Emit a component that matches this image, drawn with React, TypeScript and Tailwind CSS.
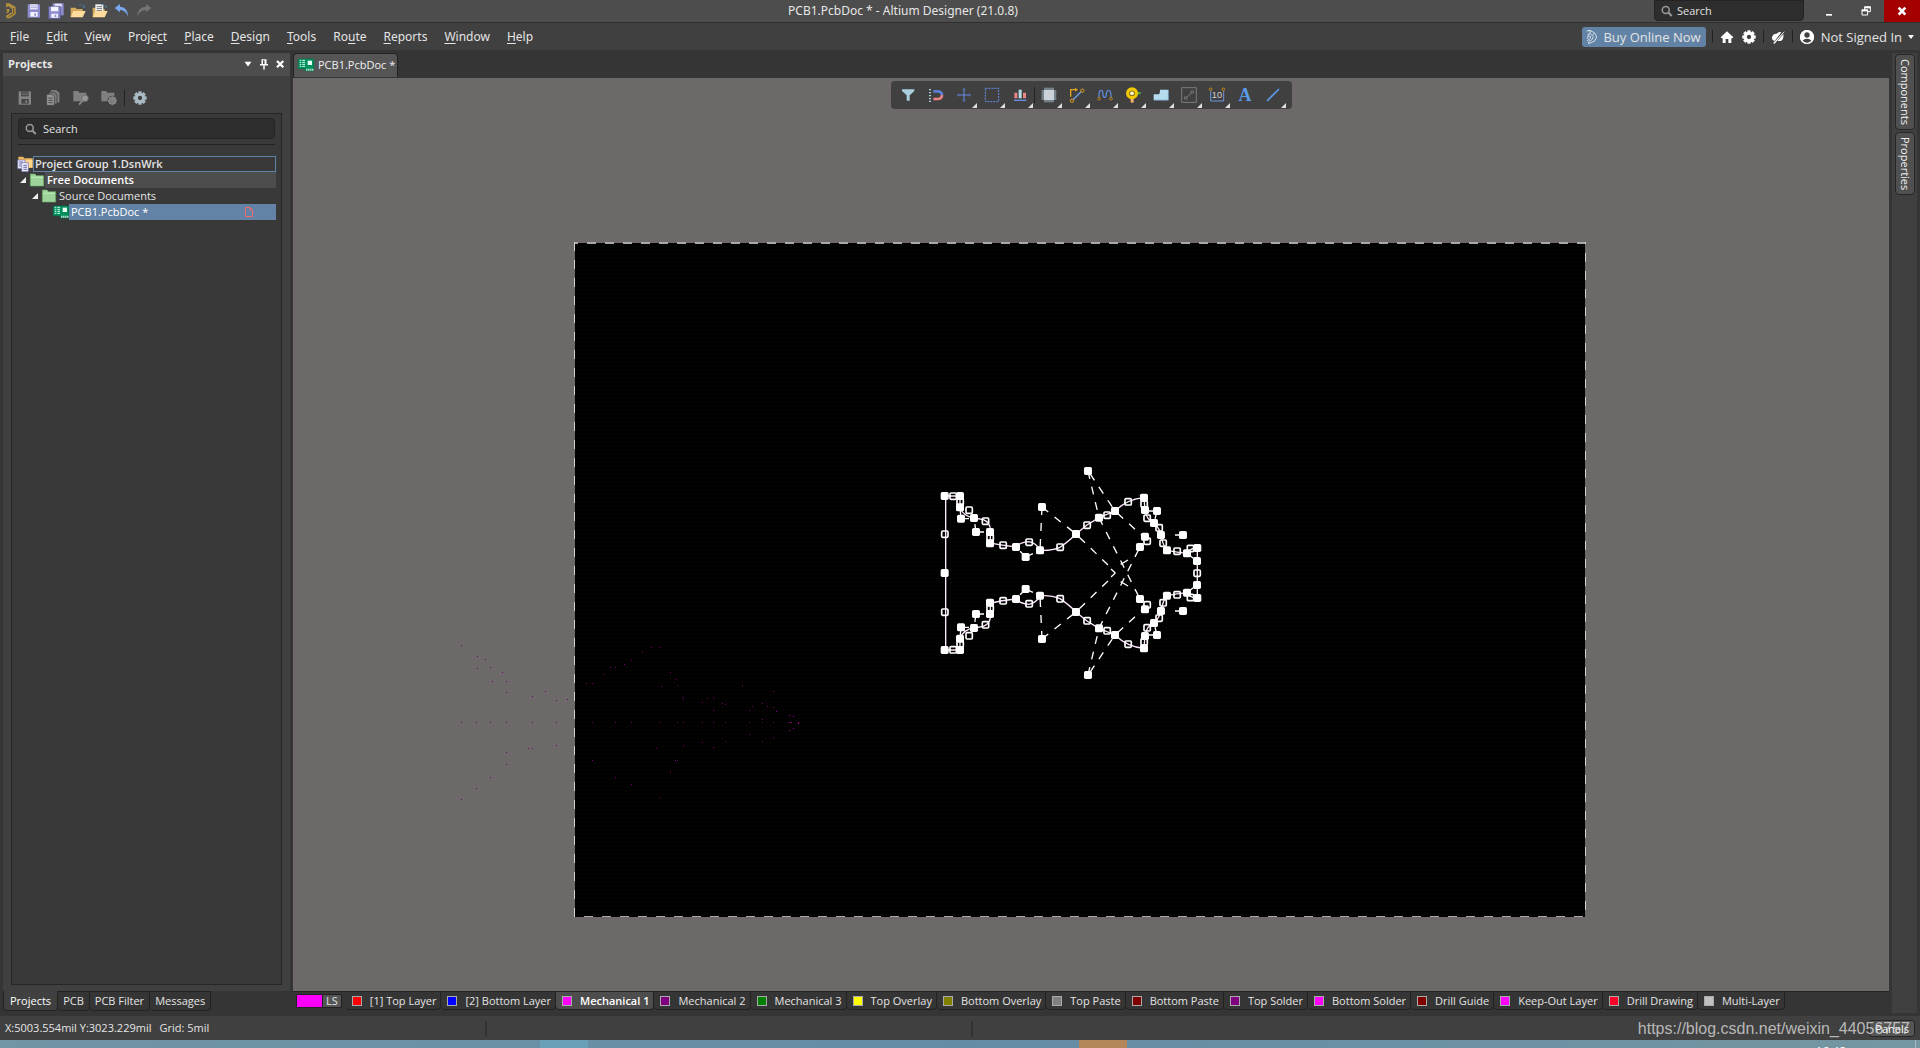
import type { ReactNode } from "react";

type Point = [number, number];

const MENU: [string, string, string][] = [
  ["", "F", "ile"],
  ["", "E", "dit"],
  ["", "V", "iew"],
  ["Proje", "c", "t"],
  ["", "P", "lace"],
  ["", "D", "esign"],
  ["", "T", "ools"],
  ["Ro", "u", "te"],
  ["", "R", "eports"],
  ["", "W", "indow"],
  ["", "H", "elp"],
];

const LAYERS = [
  { name: "[1] Top Layer", color: "#ff0000" },
  { name: "[2] Bottom Layer", color: "#0000ff" },
  { name: "Mechanical 1", color: "#ff00ff", active: true },
  { name: "Mechanical 2", color: "#800080" },
  { name: "Mechanical 3", color: "#008000" },
  { name: "Top Overlay", color: "#ffff00" },
  { name: "Bottom Overlay", color: "#808000" },
  { name: "Top Paste", color: "#808080" },
  { name: "Bottom Paste", color: "#800000" },
  { name: "Top Solder", color: "#800080" },
  { name: "Bottom Solder", color: "#ff00ff" },
  { name: "Drill Guide", color: "#800000" },
  { name: "Keep-Out Layer", color: "#ff00ff" },
  { name: "Drill Drawing", color: "#ff002b" },
  { name: "Multi-Layer", color: "#c0c0c0" },
];

// outline geometry, upper half only; the lower half is mirrored about AXIS
const AXIS = 354;

const FILLED: Point[] = [
  [44, 123], [90, 123], [90, 157], [93, 191], [132, 189], [138, 231], [180, 231],
  [180, 265], [258, 276], [287, 306], [330, 286], [336, 156], [438, 237], [507, 188],
  [555, 168], [474, 48], [642, 128], [645, 165], [681, 168], [672, 204], [645, 245],
  [630, 276], [693, 240], [759, 240], [711, 286], [771, 295], [802, 279], [801, 318],
];

const OPEN: Point[] = [
  [69, 123], [90, 140], [117, 165], [166, 198], [180, 247], [219, 270], [297, 261],
  [390, 276], [471, 210], [531, 180], [594, 140], [642, 147], [651, 189], [687, 218],
  [651, 258], [699, 264], [741, 288], [781, 280],
];

// stray primitives left of the outline, 3 units to a pixel
const DOTS: Point[] = [
  [64, 76], [112, 108], [137, 118], [112, 146], [150, 143], [188, 156], [157, 184],
  [199, 183], [199, 216], [276, 228], [317, 214], [348, 240], [382, 237], [64, 307],
  [108, 307], [150, 307], [199, 307], [276, 307], [348, 307], [348, 375], [264, 386],
  [276, 386], [199, 398], [199, 433], [150, 471], [108, 505], [64, 538], [440, 191],
  [457, 191], [492, 163], [510, 142], [525, 142], [552, 133], [575, 121], [607, 97],
  [634, 82], [661, 82], [690, 157], [708, 177], [713, 197], [664, 199], [727, 233],
  [729, 237], [457, 307], [525, 307], [575, 307], [661, 307], [713, 307], [729, 307],
  [788, 307], [820, 307], [855, 307], [927, 307], [966, 307], [999, 307], [788, 248],
  [802, 236], [820, 232], [820, 272], [848, 250], [855, 252], [908, 196], [927, 270],
  [938, 259], [966, 250], [981, 259], [999, 263], [999, 214], [1009, 273], [966, 299],
  [1049, 285], [1060, 288], [1049, 307], [1055, 307], [1076, 306], [1076, 311],
  [1060, 326], [1049, 330], [999, 351], [966, 363], [927, 343], [855, 363], [820, 382],
  [788, 366], [729, 376], [648, 385], [457, 422], [705, 422], [713, 420], [690, 457],
  [525, 471], [575, 493], [661, 532],
];

function Half() {
  return (
    <g>
      <path
        d="M47 354V123H90V157Q100 185 132 189L160 194Q184 204 181 231V263Q205 270 258 276Q270 262 297 260Q318 263 330 286Q364 288 390 277Q420 256 438 237L471 210L507 188L555 168Q592 132 642 128L645 165Q650 196 672 204Q690 222 693 240Q698 270 711 286Q742 292 771 295Q782 278 802 279V354"
        stroke="#ffe8ff"
        strokeWidth="4"
      />
      <path
        d="M336 156L330 286M336 156L438 237L536 332M474 48L507 188M480 56L555 168L645 250M507 188L630 432M681 168H645M681 168L672 204M759 240H735M93 191L90 157M93 191H132M138 231L132 189M138 231H180M287 306L258 276M287 306L330 286M771 295L801 318"
        stroke="#fff"
        strokeWidth="4"
        strokeDasharray="24 24"
      />
      <path d="M543 342L556 354M594 315L572 328" stroke="#fff" strokeWidth="4" />
      {FILLED.map(([x, y]) => (
        <rect key={`f${x}-${y}`} x={x - 12} y={y - 12} width="24" height="24" rx="5" fill="#fff" />
      ))}
      {OPEN.map(([x, y]) => (
        <rect key={`o${x}-${y}`} x={x - 9} y={y - 9} width="19" height="19" rx="3" stroke="#fff" strokeWidth="5" />
      ))}
    </g>
  );
}

function Board() {
  return (
    <svg
      viewBox="293 78 1596 913"
      className="block h-full w-full"
      fill="none"
      role="img"
      aria-label="PCB board"
    >
      <defs>
        <pattern id="grid" width="4" height="4" patternUnits="userSpaceOnUse">
          <rect x="2" y="2" width="1" height="1" fill="#0d0d0d" />
        </pattern>
      </defs>
      <rect x="575" y="243" width="1010" height="674" fill="#000" />
      <rect x="575" y="243" width="1010" height="673" fill="url(#grid)" />
      <g stroke="#a8a8a8" strokeDasharray="9 9">
        <path d="M574 243H1585" strokeWidth="2" strokeDashoffset="5" />
        <path d="M574 916.5H1585" strokeDashoffset="8" />
        <path d="M574.5 242V917" stroke="#d0d0d0" />
        <path d="M1585.5 242V917" strokeDashoffset="7" stroke="#d0d0d0" />
      </g>
      <g shapeRendering="crispEdges">
        {DOTS.map(([x, y]) => (
          <rect
            key={`${x}-${y}`}
            x={440 + Math.round(x / 3 - 0.5)}
            y={620 + Math.round(y / 3 - 0.5)}
            width="1"
            height="1"
            fill={x > 1000 ? "#a000a0" : "#700070"}
          />
        ))}
      </g>
      <g transform="translate(930 455) scale(0.3333)">
        <Half />
        <g transform={`translate(0 ${AXIS * 2}) scale(1 -1)`}>
          <Half />
        </g>
        <rect x="32" y="342" width="24" height="24" rx="5" fill="#fff" />
        <rect x="35" y="228" width="19" height="19" rx="3" stroke="#fff" strokeWidth="5" />
        <rect x="35" y="462" width="19" height="19" rx="3" stroke="#fff" strokeWidth="5" />
        <rect x="792" y="345" width="19" height="19" rx="3" stroke="#fff" strokeWidth="5" />
      </g>
    </svg>
  );
}

function Icon({ size = "h-4 w-4", children }: { size?: string; children: ReactNode }) {
  return (
    <svg viewBox="0 0 48 48" className={`${size} shrink-0 overflow-visible`} fill="none" aria-hidden="true">
      {children}
    </svg>
  );
}

function Disk({ body, paper }: { body: string; paper: string }) {
  return (
    <Icon>
      <path d="M5 4H42V44H5z" fill={body} />
      <path d="M12 4H35V19H12z" fill={paper} />
      <path d="M13 27H35V41H13z" fill={paper} />
      <path d="M13 9H34M13 14H34" stroke={body} strokeWidth="2" />
      <path d="M25 31H30V38H25z" fill={body} />
    </Icon>
  );
}

function PcbIcon() {
  return (
    <Icon>
      <path d="M1 6H47V42H22V35H1z" fill="#00905c" stroke="#007a4c" strokeWidth="2" />
      <path d="M5 10h5M5 16h5M5 22h5M5 28h5M13 10h8M13 16h8M13 22h8M13 28h8" stroke="#d8fff0" strokeWidth="3" />
      <path d="M29 11H42V24H29z" fill="#e8fff6" />
      <path d="M25 38h3M31 38h3M37 38h3M43 38h3" stroke="#fff" strokeWidth="6" />
    </Icon>
  );
}

function Magnifier() {
  return (
    <Icon size="h-3 w-3">
      <circle cx="19" cy="20" r="14" stroke="#999" strokeWidth="6" />
      <path d="M30 31L43 44" stroke="#999" strokeWidth="8" />
    </Icon>
  );
}

const gearTeeth = [0, 45, 90, 135, 180, 225, 270, 315];

function Gear({ color, size }: { color: string; size?: string }) {
  return (
    <Icon size={size}>
      {gearTeeth.map((a) => (
        <rect key={a} x="19" y="4" width="10" height="12" fill={color} transform={`rotate(${a} 24 24)`} />
      ))}
      <circle cx="24" cy="24" r="11" stroke={color} strokeWidth="9" />
    </Icon>
  );
}

function OpenFolder({ paper }: { paper?: boolean }) {
  return (
    <Icon>
      <path d="M2 14H17L20 18H38V42H2z" fill="#d3a95c" />
      {paper && (
        <>
          <path d="M10 4H34V32H10z" fill="#f5f5f5" />
          <path d="M14 11H30M14 17H30M14 23H30" stroke="#777" strokeWidth="3" />
        </>
      )}
      <path d="M10 24H47L38 43H2z" fill="#ffdc9c" />
      <path d="M27 6Q38 2 42 12" stroke="#4a7ca0" strokeWidth="3" strokeDasharray="4 2" />
      <path d="M37 10H47L42 16z" fill="#4a7ca0" />
    </Icon>
  );
}

function TitleBar() {
  return (
    <header className="flex h-[23px] shrink-0 items-start border-b border-[#2f2f2f] bg-[#4d4d4d]">
      <div className="flex items-center gap-[6px] pt-[3px] pl-[3px]">
        <Icon>
          <path d="M9 1H19L38 12V33L21 46H11L9 38L27 28V18L17 10L9 13z" fill="#b28f3e" />
          <path d="M9 18H20L17 29L9 31L13 24z" fill="#b28f3e" />
          <path d="M32 15V31L17 41" stroke="#5c4f2c" strokeWidth="3" />
        </Icon>
        <button type="button" aria-label="Save" className="ml-px">
          <Disk body="#8c8cce" paper="#f4f4ff" />
        </button>
        <button type="button" aria-label="Save all">
          <Icon>
            <path d="M14 1H47V37H14z" fill="#8c8cce" />
            <path d="M20 2H41V12H20z" fill="#e8e8fa" />
            <path d="M2 10H37V47H2z" fill="#8c8cce" stroke="#51518a" strokeWidth="2" />
            <path d="M9 11H31V25H9zM10 32H30V44H10z" fill="#f4f4ff" />
            <path d="M20 35H25V42H20z" fill="#8c8cce" />
          </Icon>
        </button>
        <button type="button" aria-label="Open">
          <OpenFolder />
        </button>
        <button type="button" aria-label="Open document">
          <OpenFolder paper />
        </button>
        <button type="button" aria-label="Undo">
          <Icon>
            <path d="M2 15L18 3V11Q42 12 42 42Q37 22 18 21V28z" fill="#78a8ee" />
          </Icon>
        </button>
        <button type="button" aria-label="Redo">
          <Icon>
            <path d="M46 15L30 3V11Q4 12 4 42Q10 22 30 21V28z" fill="#747474" />
          </Icon>
        </button>
      </div>
      <h1 className="flex-1 pt-[2px] text-center font-['Noto_Sans',sans-serif] text-[12px] leading-[18px] text-[#e6e6e6]">
        PCB1.PcbDoc * - Altium Designer (21.0.8)
      </h1>
      <label className="mr-[7px] flex h-[21px] w-[150px] items-center gap-1 rounded-b border border-[#232323] bg-[#2d2d2d] pl-[6px]">
        <Magnifier />
        <input
          aria-label="Search"
          placeholder="Search"
          className="w-full min-w-0 bg-transparent text-[11px] leading-4 text-[#e6e6e6] outline-none placeholder:text-[#e0e0e0]"
        />
      </label>
      <button type="button" aria-label="Minimize" className="flex h-[22px] w-9 items-center justify-center">
        <Icon>
          <path d="M15 33H33V38H15z" fill="#fff" />
        </Icon>
      </button>
      <button type="button" aria-label="Restore" className="flex h-[22px] w-[37px] items-center justify-center">
        <Icon>
          <path d="M20 12H37V26H20z" stroke="#fff" strokeWidth="3" />
          <path d="M19 13H38" stroke="#fff" strokeWidth="6" />
          <path d="M12 22H29V36H12z" fill="#4d4d4d" stroke="#fff" strokeWidth="3" />
          <path d="M11 22H30" stroke="#fff" strokeWidth="6" />
        </Icon>
      </button>
      <button type="button" aria-label="Close" className="flex h-[22px] w-9 items-center justify-center bg-[#a50000]">
        <Icon>
          <path d="M14 14L34 35M34 14L14 35" stroke="#fff" strokeWidth="8" />
        </Icon>
      </button>
    </header>
  );
}

function Divider() {
  return <span className="h-[13px] w-px bg-[#222]" />;
}

function MenuBar() {
  return (
    <nav className="flex h-[27px] shrink-0 items-center bg-[#404040] pr-[6px] pl-[10px] text-[#e4e4e4]">
      <div className="flex flex-1 gap-[17px] font-['Noto_Sans',sans-serif] text-[12px] leading-4">
        {MENU.map(([before, key, after]) => (
          <button key={before + key + after} type="button">
            {before}
            <span className="underline underline-offset-2">{key}</span>
            {after}
          </button>
        ))}
      </div>
      <div className="flex items-center gap-[6px] text-[13px] leading-5">
        <button type="button" className="flex h-5 items-center gap-[3px] rounded-[3px] bg-[#6283a5] pr-[5px] pl-[2px]">
          <Icon>
            <path
              d="M8 6L18 4L32 12L38 24L32 36L14 44V38L25 31L28 23L20 15L13 15L11 30M13 21L20 23L19 28L9 36M18 4V14M32 12L25 19"
              stroke="#d5dfe8"
              strokeWidth="3"
            />
          </Icon>
          Buy Online Now
        </button>
        <Divider />
        <button type="button" aria-label="Home">
          <Icon>
            <path d="M24 7L43 25L40 28H37V42H28V30H20V42H11V28H8L5 25z" fill="#fff" />
          </Icon>
        </button>
        <button type="button" aria-label="Preferences">
          <Gear color="#fff" />
        </button>
        <Divider />
        <button type="button" aria-label="Notifications">
          <Icon>
            <path d="M6 24Q10 13 20 14Q27 6 34 10L14 36Q4 34 6 24zM40 10L45 7L14 44L9 43z" fill="#fff" />
            <path d="M40 16Q42 32 32 36H22z" fill="#fff" />
          </Icon>
        </button>
        <Divider />
        <button type="button" className="flex items-center gap-[6px]">
          <Icon>
            <circle cx="24" cy="24" r="21" fill="#fff" />
            <circle cx="24" cy="18" r="8" fill="#404040" />
            <path d="M9 36Q24 22 39 36Q32 44 24 44Q16 44 9 36z" fill="#404040" />
            <circle cx="24" cy="24" r="19" stroke="#fff" strokeWidth="4" />
          </Icon>
          Not Signed In
          <svg viewBox="0 0 6 4" className="h-1 w-[6px]" aria-hidden="true">
            <path d="M0 0H6L3 4z" fill="#fff" />
          </svg>
        </button>
      </div>
    </nav>
  );
}

function Arrow() {
  return (
    <svg viewBox="0 0 6 6" className="mx-[3px] h-[6px] w-[6px] shrink-0" aria-hidden="true">
      <path d="M6 0V6H0z" fill="#f0f0f0" />
    </svg>
  );
}

function Folder() {
  return (
    <Icon>
      <path d="M4 6H18L22 11H44V42H4z" fill="#9ed49a" stroke="#6aa76a" strokeWidth="2" />
      <path d="M6 16H42" stroke="#b8e6b2" strokeWidth="4" />
    </Icon>
  );
}

function ProjectTree() {
  return (
    <div className="pr-[5px] pl-[5px] text-[11px] leading-4 text-[#e4e4e4]">
      <div className="flex h-4">
        <Icon>
          <path d="M4 2H18L22 7H47V36H4z" fill="#f0b860" />
          <path d="M8 12H46V34H8z" fill="#ffd48c" />
          <path d="M2 12H24V38H2z" fill="#f0f0ff" stroke="#6868a8" strokeWidth="2" />
          <path d="M14 20H34V47H14z" fill="#f0f0ff" stroke="#6868a8" strokeWidth="2" />
          <path d="M19 28H30M19 34H30M19 40H30M6 18H18M6 24H12M6 30H12" stroke="#6868a8" strokeWidth="3" />
        </Icon>
        <span className="flex-1 bg-[#393939] pl-[2px] leading-4 font-semibold outline outline-1 -outline-offset-1 outline-[#6283a5]">
          Project Group 1.DsnWrk
        </span>
      </div>
      <div className="flex h-4 items-center">
        <Arrow />
        <Folder />
        <span className="flex-1 bg-[#4d4d4d] pl-[2px] font-semibold text-white">Free Documents</span>
      </div>
      <div className="flex h-4 items-center pl-3">
        <Arrow />
        <Folder />
        <span className="flex-1 pl-[2px]">Source Documents</span>
      </div>
      <div className="flex h-4 items-center pl-9">
        <PcbIcon />
        <span className="flex h-4 flex-1 items-center justify-between bg-[#6283a5] pr-[23px] pl-[2px] text-white">
          PCB1.PcbDoc *
          <svg viewBox="0 0 8 10" className="h-[10px] w-2" fill="none" aria-hidden="true">
            <path d="M.5 .5H5L7.500 3V9.500H.5zM5 .5V3H7.500" stroke="#f06a6a" />
          </svg>
        </span>
      </div>
    </div>
  );
}

function ProjectsPanel() {
  return (
    <aside className="flex w-[290px] shrink-0 flex-col pt-[3px] pl-[3px]">
      <div className="flex min-h-0 flex-1 flex-col bg-[#404040]">
        <div className="flex h-[23px] items-center gap-1 bg-[#4d4d4d] pr-1 pb-[2px] pl-[5px]">
          <h2 className="flex-1 text-[11px] leading-4 font-bold text-[#e8e8e8]">Projects</h2>
          <button type="button" aria-label="Panel menu">
            <Icon size="h-3 w-3">
              <path d="M10 15H38L24 34z" fill="#fff" />
            </Icon>
          </button>
          <button type="button" aria-label="Pin">
            <Icon size="h-3 w-3">
              <path d="M14 5H34V25H14zM8 24H40V30H8zM21 30H27V46H21z" fill="#fff" />
              <path d="M20 9H26V24H20z" fill="#4d4d4d" />
            </Icon>
          </button>
          <button type="button" aria-label="Close panel">
            <Icon size="h-3 w-3">
              <path d="M12 12L37 37M37 12L12 37" stroke="#fff" strokeWidth="9" />
            </Icon>
          </button>
        </div>
        <div className="flex h-[37px] items-center gap-3 pt-[6px] pl-[14px]">
          <button type="button" aria-label="Save">
            <Disk body="#858585" paper="#444" />
          </button>
          <button type="button" aria-label="Copy">
            <Icon>
              <path d="M19 2H34L42 9V36H19z" fill="#777" stroke="#999" strokeWidth="2" />
              <path d="M12 7H28L36 14V42H12z" fill="#777" stroke="#404040" strokeWidth="2" />
              <path d="M5 13H20L28 20V46H5z" fill="#999" stroke="#404040" strokeWidth="2" />
              <path d="M10 24H23M10 31H23M10 38H23" stroke="#444" strokeWidth="3" />
            </Icon>
          </button>
          <button type="button" aria-label="Explore">
            <Icon>
              <path d="M1 3H15L19 8H40V34H1z" fill="#808080" />
              <circle cx="36" cy="25" r="10" fill="#969696" stroke="#606060" strokeWidth="2" />
              <path d="M29 32L18 44" stroke="#858585" strokeWidth="6" />
            </Icon>
          </button>
          <button type="button" aria-label="Project options">
            <Icon>
              <path d="M1 3H15L19 8H40V34H1z" fill="#808080" />
              <circle cx="34" cy="32" r="15" fill="#404040" />
              <circle cx="34" cy="32" r="9" stroke="#858585" strokeWidth="7" />
              <path d="M34 18V46M20 32H48M24 22L44 42M44 22L24 42" stroke="#858585" strokeWidth="3" />
            </Icon>
          </button>
          <span className="-mx-[5px] h-4 w-px bg-[#222]" />
          <button type="button" aria-label="Settings">
            <Gear color="#a9bbc4" />
          </button>
        </div>
        <div className="mx-2 mb-[6px] flex-1 border border-[#262626] bg-[#393939]">
          <label className="mx-[6px] mt-1 flex h-[21px] items-center gap-[6px] rounded border border-[#242424] bg-[#2d2d2d] pl-[6px]">
            <Magnifier />
            <input
              aria-label="Search projects"
              placeholder="Search"
              className="w-full min-w-0 bg-transparent text-[11px] leading-4 outline-none placeholder:text-[#e4e4e4]"
            />
          </label>
          <div className="mx-[6px] mt-[5px] mb-[11px] h-px bg-[#222]" />
          <ProjectTree />
        </div>
      </div>
      <div className="flex h-[25px] items-start text-[11px] leading-4 text-[#e4e4e4]">
        <button type="button" className="h-5 rounded-b border border-t-0 border-[#222] bg-[#404040] px-[6px] text-white">
          Projects
        </button>
        {["PCB", "PCB Filter", "Messages"].map((tab) => (
          <button
            key={tab}
            type="button"
            className="h-5 rounded-b border border-l-0 border-[#222] bg-[#353535] px-[5px]"
          >
            {tab}
          </button>
        ))}
      </div>
    </aside>
  );
}

const TOOLS: { name: string; menu?: boolean; art: ReactNode }[] = [
  {
    name: "Filter",
    art: (
      <path d="M6 7H43V12L29 25V41H20V25L6 12z" fill="#a9cfdc" />
    ),
  },
  {
    name: "Snapping",
    art: (
      <>
        <path d="M16 13H30Q42 14 42 24" stroke="#5c7ed6" strokeWidth="8" />
        <path d="M16 36H30Q42 35 42 24" stroke="#e88484" strokeWidth="8" />
        <path d="M3 8H9M3 17H9M3 26H9M3 35H9M3 43H9" stroke="#a9cfdc" strokeWidth="4" />
      </>
    ),
  },
  {
    name: "Move",
    menu: true,
    art: (
      <>
        <path d="M24 5V43M5 24H43" stroke="#668ee4" strokeWidth="3" />
        <path d="M20 10L24 4L28 10M20 38L24 44L28 38M10 20L4 24L10 28M38 20L44 24L38 28" stroke="#5378c8" strokeWidth="2" />
      </>
    ),
  },
  {
    name: "Select",
    menu: true,
    art: <path d="M4 4H44V44H4z" stroke="#668ee4" strokeWidth="3" strokeDasharray="6 3" />,
  },
  {
    name: "Align",
    menu: true,
    art: (
      <>
        <path d="M7 17H16V34H7zM33 17H42V34H33z" fill="#e88484" />
        <path d="M20 8H29V34H20z" fill="#b8dbe6" />
        <path d="M6 40H43" stroke="#668ee4" strokeWidth="4" />
      </>
    ),
  },
  {
    name: "Component",
    menu: true,
    art: (
      <>
        <path
          d="M12 2V46M18 2V46M24 2V46M30 2V46M36 2V46M2 12H46M2 18H46M2 24H46M2 30H46M2 36H46"
          stroke="#a8c4d4"
          strokeWidth="3"
        />
        <path d="M9 9H39V39H9z" fill="#ccd2d8" />
      </>
    ),
  },
  {
    name: "Route",
    menu: true,
    art: (
      <>
        <path d="M5 29V8H20" stroke="#e0a020" strokeWidth="4" />
        <path d="M18 2L27 8L18 14z" fill="#e0a020" />
        <path d="M12 38L36 14" stroke="#6aa0e8" strokeWidth="4" />
        <circle cx="9" cy="41" r="5" stroke="#e0a020" strokeWidth="3" />
        <circle cx="40" cy="11" r="5" stroke="#e0a020" strokeWidth="3" />
      </>
    ),
  },
  {
    name: "Length tuning",
    menu: true,
    art: (
      <>
        <path d="M6 32Q5 10 12 10Q18 10 18 22Q18 31 23 31Q28 31 28 20Q29 10 35 10Q43 10 42 32" stroke="#5c86d6" strokeWidth="4" />
        <circle cx="6" cy="35" r="4" stroke="#b88420" strokeWidth="3" />
        <circle cx="42" cy="35" r="4" stroke="#b88420" strokeWidth="3" />
      </>
    ),
  },
  {
    name: "Via",
    menu: true,
    art: (
      <>
        <path d="M32 15H47V22H32z" fill="#5ca63c" />
        <path d="M17 30H26V47H17z" fill="#f0b070" />
        <circle cx="21" cy="19" r="13" stroke="#f2c800" strokeWidth="10" />
        <circle cx="21" cy="19" r="7" fill="#fff4c0" stroke="#6a5800" strokeWidth="2" />
      </>
    ),
  },
  {
    name: "Polygon",
    menu: true,
    art: (
      <>
        <path d="M2 22H17Q21 21 21 8H46V40H2z" fill="#b4dcec" />
        <path d="M3 39H46V9" stroke="#7aa8d8" strokeWidth="2" />
      </>
    ),
  },
  {
    name: "Cutout",
    menu: true,
    art: (
      <>
        <path d="M2 2H46V46H2z" stroke="#7c7c7c" strokeWidth="3" />
        <path d="M17 31L32 17" stroke="#7c7c7c" strokeWidth="3" />
        <circle cx="14" cy="33" r="4" stroke="#7c7c7c" strokeWidth="3" />
        <circle cx="34" cy="15" r="4" stroke="#7c7c7c" strokeWidth="3" />
      </>
    ),
  },
  {
    name: "Dimension",
    menu: true,
    art: (
      <>
        <path d="M5 13V42H44V13" stroke="#6a98e0" strokeWidth="3" />
        <circle cx="5" cy="7" r="4" stroke="#c88c20" strokeWidth="3" />
        <circle cx="43" cy="7" r="4" stroke="#c88c20" strokeWidth="3" />
        <text x="24" y="34" textAnchor="middle" fontSize="28" fontFamily="Liberation Sans, sans-serif" fill="#d0d0d0">
          10
        </text>
      </>
    ),
  },
  {
    name: "Text",
    art: (
      <text
        x="24"
        y="42"
        textAnchor="middle"
        fontSize="54"
        fontWeight="700"
        fontFamily="Liberation Serif, serif"
        fill="#5a9ae6"
      >
        A
      </text>
    ),
  },
  {
    name: "Line",
    menu: true,
    art: <path d="M6 42L42 6" stroke="#5a9ae6" strokeWidth="5" />,
  },
];

function FloatingToolbar() {
  return (
    <div className="absolute inset-x-0 top-[3px] flex justify-center">
      <div className="flex h-7 items-center rounded bg-[#404040] pr-[5px] pl-[3px]">
        {TOOLS.map(({ name, menu, art }) => (
          <div key={name} className="flex items-center">
            <button type="button" aria-label={name} className="relative flex h-7 w-7 items-center justify-center">
              <Icon>{art}</Icon>
              {menu && (
                <svg viewBox="0 0 5 5" className="absolute right-[1px] bottom-[1px] h-[5px] w-[5px]" aria-hidden="true">
                  <path d="M5 0V5H0z" fill="#e0e0e0" />
                </svg>
              )}
            </button>
            {name === "Align" && <span className="h-4 w-px bg-[#222]" />}
          </div>
        ))}
      </div>
    </div>
  );
}

function Workspace() {
  return (
    <main className="flex min-w-0 flex-1 flex-col pl-[3px] text-[11px]">
      <div className="flex h-7 shrink-0 items-end pb-px">
        <button
          type="button"
          className="flex h-6 items-center gap-1 rounded-t border border-b-0 border-[#232323] bg-[#555] pr-[2px] pb-[2px] pl-1 leading-4 text-[#f0f0f0]"
        >
          <PcbIcon />
          PCB1.PcbDoc *
        </button>
      </div>
      <div className="relative min-h-0 flex-1 bg-[#6d6968]">
        <Board />
        <FloatingToolbar />
      </div>
      <div className="flex h-[25px] shrink-0 items-start border-t border-[#222] leading-4 text-[#e4e4e4]">
        <button type="button" className="mt-[2px] mr-1 ml-[3px] flex h-[14px] items-center border border-[#222] bg-[#555]">
          <span className="h-3 w-[25px] bg-[#ff00ff]" />
          <span className="border-l border-[#222] px-[3px] leading-3">LS</span>
        </button>
        {LAYERS.map(({ name, color, active }) => (
          <button
            key={name}
            type="button"
            className={`flex h-[18px] items-center gap-2 rounded-b border-r border-b border-[#222] pr-1 pl-[6px] whitespace-nowrap ${
              active ? "bg-[#4d4d4d] font-semibold text-white" : "bg-[#353535]"
            }`}
          >
            <span className="h-[10px] w-[10px] border border-[#aaa]" style={{ backgroundColor: color }} />
            {name}
          </button>
        ))}
      </div>
    </main>
  );
}

function SideTabs() {
  return (
    <div className="flex shrink-0 p-[3px]">
      <div className="flex w-[25px] flex-col items-center gap-[2px] bg-[#404040] pt-px">
        {["Components", "Properties"].map((tab) => (
          <button
            key={tab}
            type="button"
            className="w-5 rounded border border-[#262626] bg-[#505050] pt-1 pb-1 text-[11px] leading-[18px] text-[#f0f0f0] [writing-mode:vertical-rl]"
          >
            {tab}
          </button>
        ))}
      </div>
    </div>
  );
}

function StatusBar() {
  return (
    <footer className="relative flex h-6 shrink-0 items-center bg-[#404040] pr-[5px] pl-[5px] text-[11px] leading-4 text-[#e4e4e4]">
      <div className="flex flex-1 gap-2">
        <span>X:5003.554mil Y:3023.229mil</span>
        <span>Grid: 5mil</span>
      </div>
      <button type="button" className="h-[17px] rounded-[3px] border border-[#262626] bg-[#555] px-[5px] leading-[15px] text-white">
        Panels
      </button>
      <span className="absolute top-[5px] left-[485px] h-4 w-[2px] bg-[#333]" />
      <span className="absolute top-[5px] left-[971px] h-4 w-[2px] bg-[#333]" />
      <span className="absolute right-[10px] bottom-px font-['Liberation_Sans',sans-serif] text-[16px] leading-5 text-[#d8d8d8]/80">
        https://blog.csdn.net/weixin_44056757
      </span>
    </footer>
  );
}

export default function App() {
  return (
    <div className="flex h-screen flex-col overflow-hidden bg-[#353535] font-['Open_Sans','Noto_Sans',sans-serif]">
      <TitleBar />
      <MenuBar />
      <div className="flex min-h-0 flex-1">
        <ProjectsPanel />
        <Workspace />
        <SideTabs />
      </div>
      <StatusBar />
      <div className="relative h-2 shrink-0 overflow-hidden bg-linear-to-r from-[#7195a5] via-[#648ca5] to-[#7596a2]">
        <span className="absolute left-[540px] h-2 w-12 bg-[#6aa0b8]" />
        <span className="absolute left-[1079px] h-2 w-12 bg-[#b4875a]" />
        <time className="absolute top-1 right-[74px] text-[12px] leading-4 text-white">16:42</time>
        <span className="absolute right-1 h-2 w-px bg-[#a5bac2]" />
      </div>
    </div>
  );
}
